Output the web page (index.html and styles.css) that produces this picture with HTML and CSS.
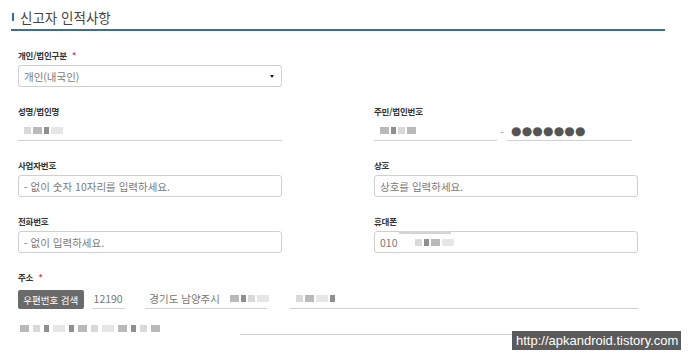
FILE: index.html
```html
<!DOCTYPE html>
<html lang="ko">
<head>
    <meta charset="UTF-8">
    <meta name="viewport" content="width=device-width, initial-scale=1.0">
    <title>신고자 인적사항</title>
    <link rel="stylesheet" href="styles.css">
</head>
<body>
    <div class="page">
        <div class="section-head">
            <span class="head-bar"></span>
            <span class="head-title">신고자 인적사항</span>
        </div>

        <div class="form">
            <!-- 개인/법인구분 -->
            <div class="field">
                <div class="label">개인/법인구분 <span class="req">*</span></div>
                <div class="box select">
                    <span class="muted">개인(내국인)</span>
                    <span class="caret"></span>
                </div>
            </div>
            <div class="field"></div>

            <!-- 성명 / 주민번호 -->
            <div class="field">
                <div class="label">성명/법인명</div>
                <div class="line">
                    <span class="blur">
                        <i class="px p1"></i><i class="px p2"></i><i class="px p3"></i><i class="px p4"></i>
                    </span>
                </div>
            </div>
            <div class="field">
                <div class="label">주민/법인번호</div>
                <div class="jumin">
                    <div class="line jumin-front">
                        <span class="blur">
                            <i class="px p2"></i><i class="px p3"></i><i class="px p1"></i><i class="px p2"></i>
                        </span>
                    </div>
                    <span class="dash">-</span>
                    <div class="line jumin-back">
                        <span class="dots">●●●●●●●</span>
                    </div>
                </div>
            </div>

            <!-- 사업자번호 / 상호 -->
            <div class="field">
                <div class="label">사업자번호</div>
                <div class="box"><span class="muted">- 없이 숫자 10자리를 입력하세요.</span></div>
            </div>
            <div class="field">
                <div class="label">상호</div>
                <div class="box"><span class="muted">상호를 입력하세요.</span></div>
            </div>

            <!-- 전화번호 / 휴대폰 -->
            <div class="field">
                <div class="label">전화번호</div>
                <div class="box"><span class="muted">- 없이 입력하세요.</span></div>
            </div>
            <div class="field">
                <div class="label">휴대폰</div>
                <div class="box phone">
                    <span class="muted">010</span>
                    <span class="blur">
                        <i class="px p1"></i><i class="px p3"></i><i class="px p2"></i><i class="px p4"></i>
                    </span>
                    <span class="smear"></span>
                </div>
            </div>

            <!-- 주소 -->
            <div class="field wide">
                <div class="label">주소 <span class="req">*</span></div>
                <div class="addr">
                    <span class="zip-btn">우편번호 검색</span>
                    <div class="line zip">12190</div>
                    <div class="line addr-main">
                        경기도 남양주시
                        <span class="blur">
                            <i class="px p2"></i><i class="px p3"></i><i class="px p1"></i><i class="px p4"></i>
                        </span>
                    </div>
                    <div class="line addr-rest">
                        <span class="blur">
                            <i class="px p1"></i><i class="px p2"></i><i class="px p4"></i><i class="px p3"></i>
                        </span>
                    </div>
                </div>
                <div class="addr-2">
                    <span class="blur long">
                        <i class="px p2"></i><i class="px p1"></i><i class="px p3"></i><i class="px p4"></i>
                        <i class="px p3"></i><i class="px p2"></i><i class="px p1"></i><i class="px p4"></i>
                        <i class="px p2"></i><i class="px p3"></i><i class="px p1"></i><i class="px p2"></i>
                    </span>
                    <div class="line addr-detail"></div>
                </div>
            </div>
        </div>

        <div class="watermark">http://apkandroid.tistory.com</div>
    </div>
</body>
</html>
```

FILE: styles.css
```css
* { margin: 0; padding: 0; box-sizing: border-box; }
body {
    font-family: "Noto Sans CJK KR", "Noto Sans", sans-serif;
    background: #fff;
    color: #333;
}
.page { position: relative; width: 700px; height: 364px; overflow: hidden; }

.section-head {
    margin-left: 11px;
    width: 654px;
    height: 31px;
    padding-top: 5px;
    border-bottom: 2px solid #3b6f92;
    display: flex;
    align-items: center;
}
.head-bar { width: 2px; height: 8px; background: #2f6fa6; margin: 0 6px 0 1px; }
.head-title { font-size: 13.5px; color: #444; line-height: 20px; }

.form {
    display: grid;
    grid-template-columns: 264px 264px;
    column-gap: 92px;
    padding: 17px 0 0 18px;
}
.field { margin-bottom: 17px; }
.field.wide { grid-column: 1 / 3; margin-bottom: 0; }

.label {
    font-size: 8.5px;
    font-weight: 700;
    color: #333;
    line-height: 14px;
    margin-bottom: 3px;
    letter-spacing: -0.2px;
}
.req { color: #e8333d; margin-left: 3px; }

.box {
    height: 22px;
    border: 1px solid #cfcfcf;
    border-radius: 3px;
    padding-left: 5px;
    display: flex;
    align-items: center;
    font-size: 10.5px;
}
.muted { color: #7a7a7a; }
.select { justify-content: space-between; padding-right: 7px; }
.caret { width: 0; height: 0; border-left: 2.5px solid transparent; border-right: 2.5px solid transparent; border-top: 3px solid #222; }

.line {
    height: 20px;
    border-bottom: 1px solid #cfcfcf;
    display: flex;
    align-items: center;
    font-size: 10.5px;
}

.jumin { display: flex; align-items: center; }
.jumin-front { width: 123px; }
.dash { width: 10px; text-align: center; font-size: 10px; color: #888; }
.jumin-back { width: 125px; padding-left: 4px; }
.dots { font-family: "DejaVu Sans", sans-serif; font-size: 12px; color: #555; letter-spacing: 0.2px; }

.blur { display: inline-flex; align-items: center; gap: 2px; margin-left: 6px; }
.px { display: inline-block; width: 7px; height: 7px; }
.p1 { background: #d9d9d9; }
.p2 { background: #b9b9b9; width: 9px; }
.p3 { background: #8f8f8f; width: 5px; }
.p4 { background: #e6e6e6; width: 12px; }

.phone { position: relative; }
.phone .blur { margin-left: 18px; }
.smear { position: absolute; left: 24px; top: -1px; width: 52px; height: 3px; background: #d4d4d4; }

.addr { display: flex; align-items: flex-end; height: 22px; }
.zip-btn {
    width: 66px;
    height: 19px;
    background: #6a6a6a;
    color: #fff;
    font-size: 9.5px;
    border-radius: 2px;
    display: flex;
    align-items: center;
    justify-content: center;
}
.zip { width: 34px; margin-left: 8px; padding-left: 2px; color: #777; font-size: 10.5px; }
.addr-main { width: 122px; margin-left: 20px; padding-left: 4px; color: #777; white-space: nowrap; }
.addr-main .blur { margin-left: 10px; }
.addr-rest { width: 350px; margin-left: 23px; }

.addr-2 { display: flex; align-items: flex-end; height: 26px; }
.blur.long { margin-left: 2px; width: 200px; height: 14px; gap: 4px; }
.addr-detail { width: 398px; margin-left: 20px; }

.watermark {
    position: absolute;
    left: 512px;
    top: 331px;
    width: 169px;
    height: 19px;
    background: #5b5b5b;
    color: #fff;
    font-family: "Liberation Sans", sans-serif;
    font-size: 13px;
    line-height: 19px;
    padding-left: 4px;
}
```
